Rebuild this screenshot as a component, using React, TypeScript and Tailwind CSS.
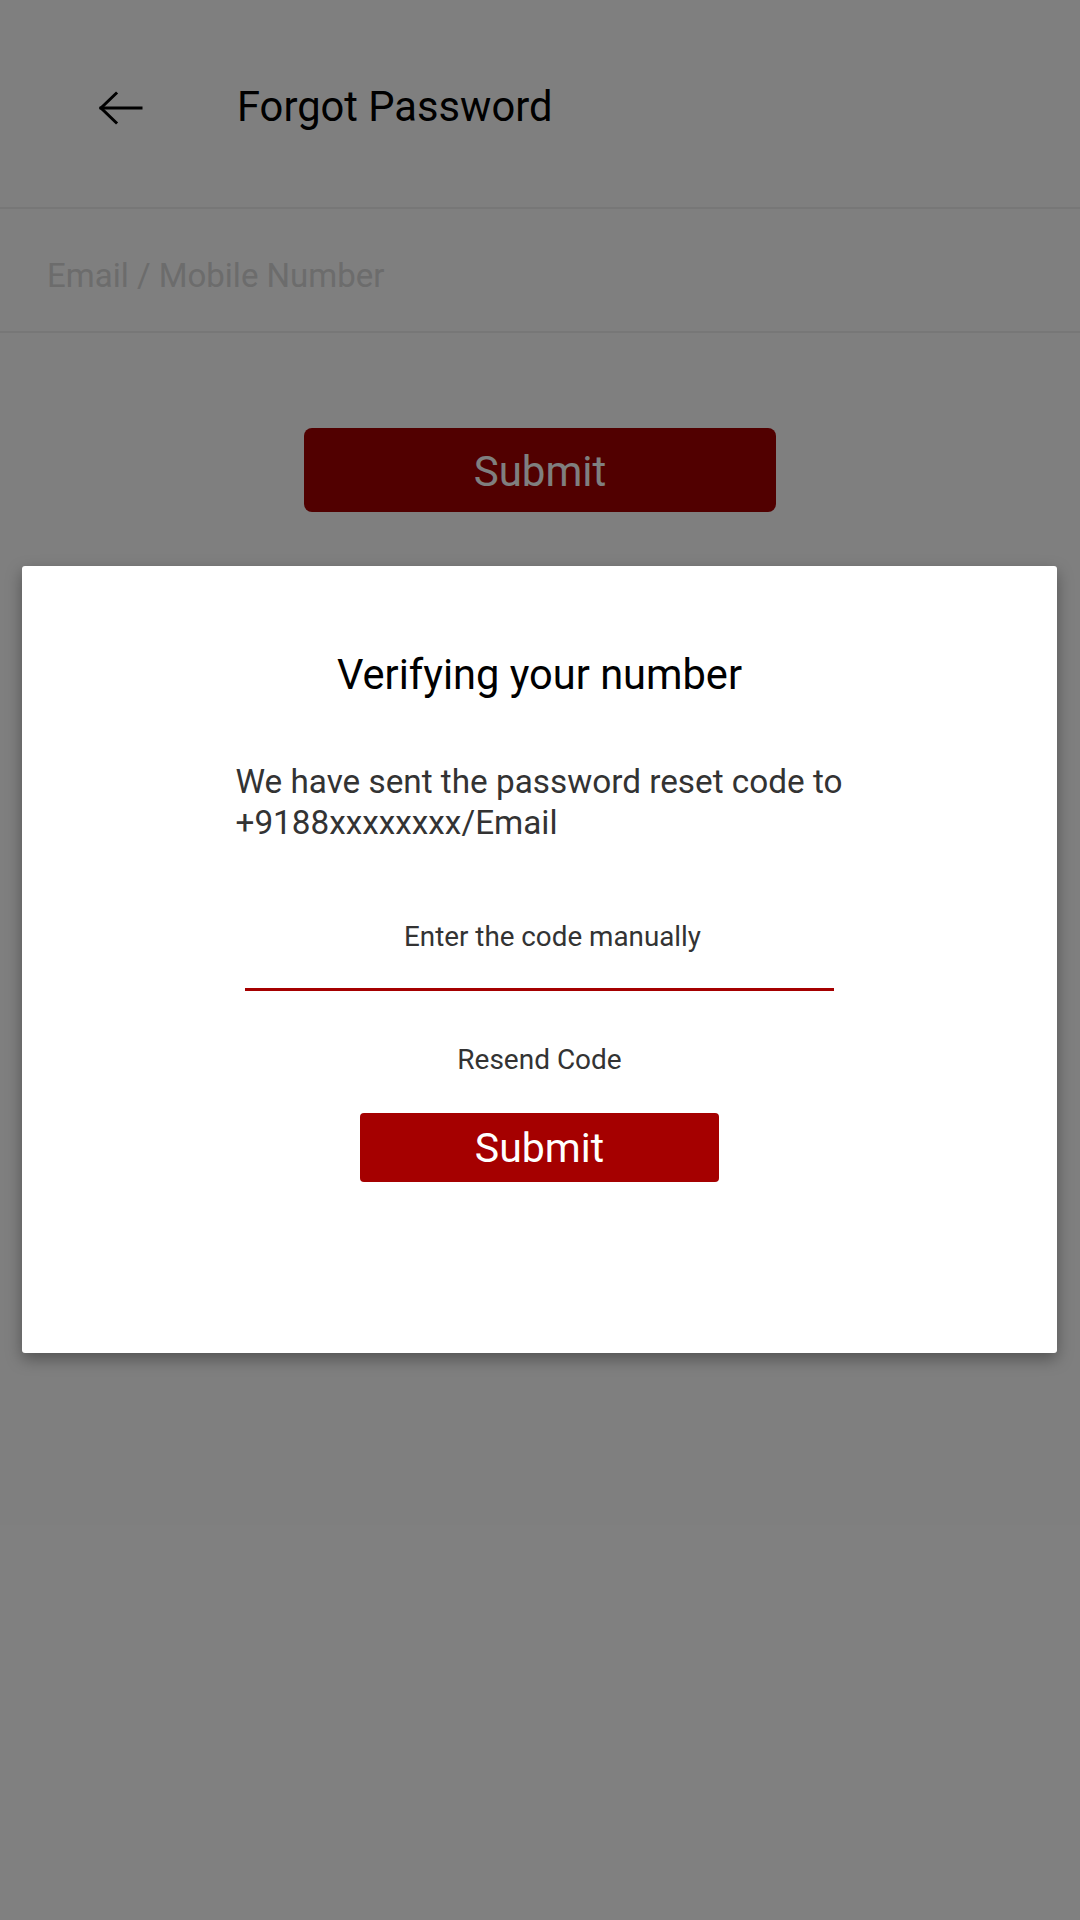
import { useState } from 'react';

function BackArrow() {
  return (
    <svg width="46" height="34" viewBox="0 0 46 34" fill="none" stroke="#000" strokeWidth="3" strokeLinecap="square">
      <path d="M4 17 H44" />
      <path d="M19 2.5 L4 17 L19 31.5" strokeLinejoin="miter" />
    </svg>
  );
}

export default function App() {
  const [code, setCode] = useState('');

  return (
    <div className="relative min-h-[1920px] bg-white font-['Roboto','Liberation_Sans',sans-serif]">
      {/* page under the dialog */}
      <header className="flex h-[209px] items-center border-b-2 border-[#eeeeee] pt-[6px]">
        <div className="ml-[97px] mt-[2px] flex w-[140px] items-center">
          <BackArrow />
        </div>
        <h1 className="text-[41.7px] leading-none text-black">Forgot Password</h1>
      </header>

      <div className="flex h-[124px] items-center border-b-2 border-[#eeeeee] pl-[47px] pt-[12px]">
        <span className="text-[33px] text-[#d8d8d8]">Email / Mobile Number</span>
      </div>

      <div className="mt-[95px] flex justify-center">
        <button className="h-[84px] w-[472px] rounded-[8px] bg-[#a30000] pt-[2px] text-[42px] text-white">
          Submit
        </button>
      </div>

      {/* dim overlay */}
      <div className="absolute inset-0 bg-black/50" />

      {/* dialog */}
      <div className="absolute left-[22px] top-[566px] flex h-[787px] w-[1035px] flex-col items-center rounded-[3px] bg-white shadow-[0_6px_16px_rgba(0,0,0,0.35)]">
        <h2 className="mt-[85px] text-[41.6px] leading-[48px] text-black">Verifying your number</h2>

        <p className="mt-[62px] w-[608px] text-[33.3px] leading-[41px] text-[#333333]">
          We have sent the password reset code to
          <br />
          +9188xxxxxxxx/Email
        </p>

        <div className="mt-[77px] w-[589px] border-b-[3px] border-[#a50000] pb-[34px]">
          <input
            value={code}
            onChange={(e) => setCode(e.target.value)}
            placeholder="Enter the code manually"
            className="block h-[34px] w-full pl-[26px] text-center text-[27.8px] leading-[34px] text-[#333333] outline-none placeholder:text-[#333333]"
          />
        </div>

        <button className="mt-[52px] text-[28px] leading-[34px] text-[#333333]">Resend Code</button>

        <button className="mt-[36px] h-[69px] w-[359px] rounded-[4px] bg-[#a50000] pt-[2px] text-[41px] text-white">
          Submit
        </button>
      </div>
    </div>
  );
}
